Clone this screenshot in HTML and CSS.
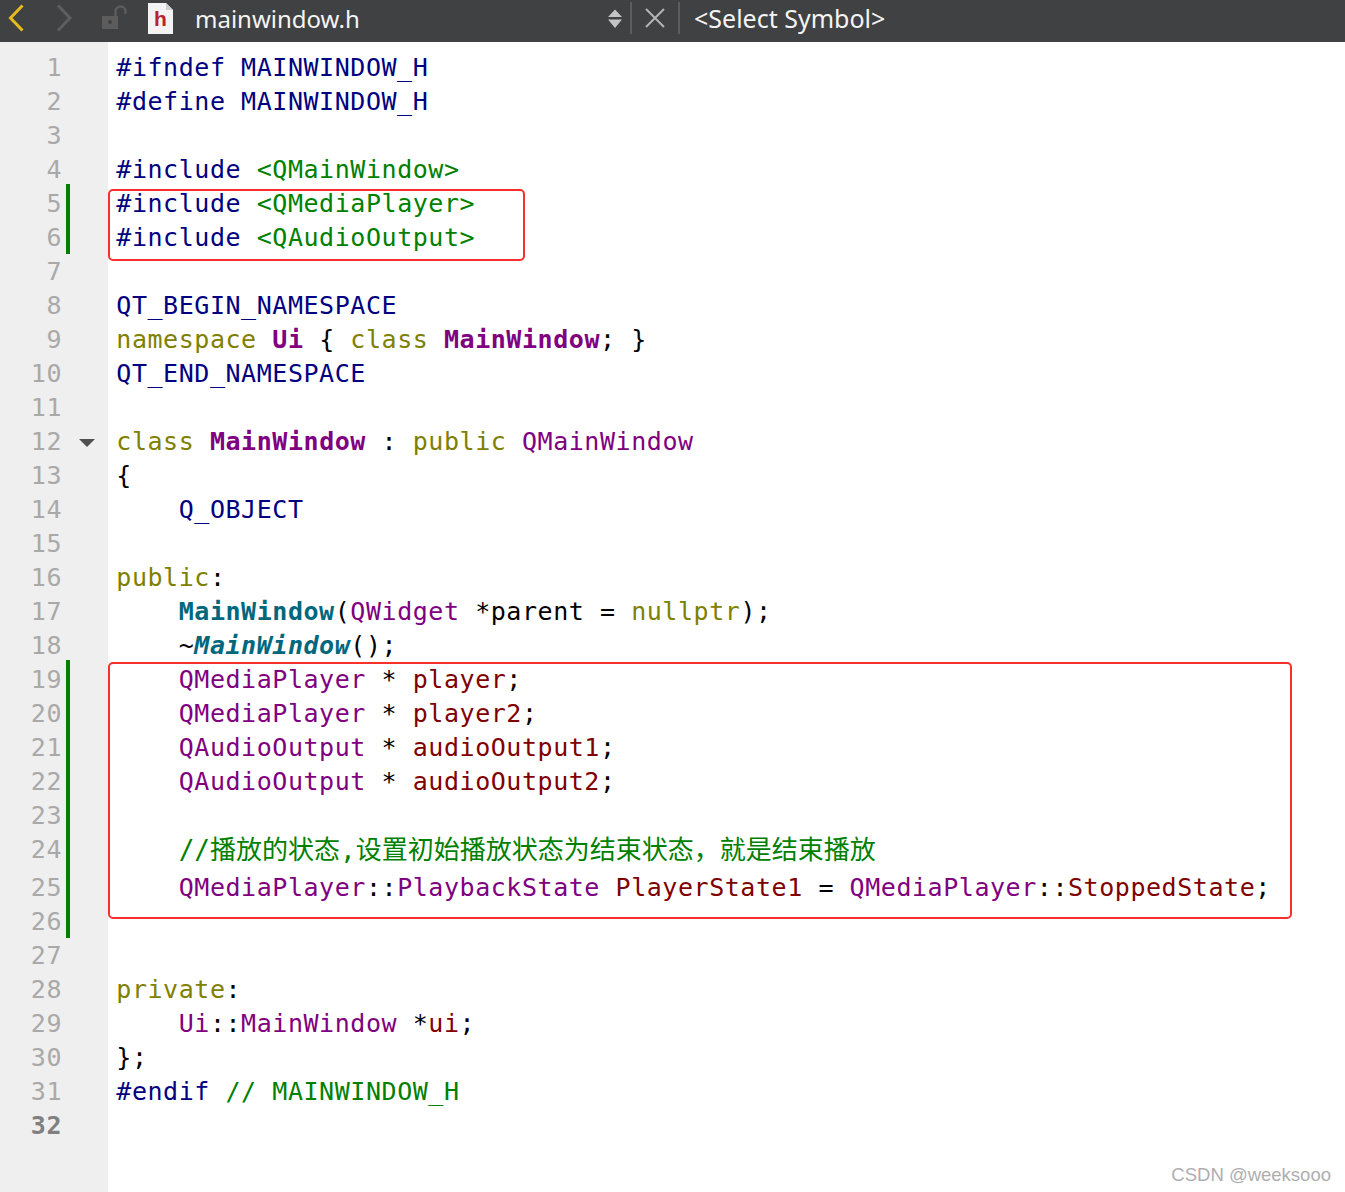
FILE: index.html
```html
<!DOCTYPE html>
<html lang="en">
<head>
<meta charset="utf-8">
<title>mainwindow.h</title>
<link rel="stylesheet" href="styles.css">
</head>
<body>
<header class="toolbar">
  <svg class="ic ic-back" width="18" height="28" viewBox="0 0 18 28"><path d="M14.5 1.5 L2.5 14 L14.5 26.5" fill="none" stroke="#e8bb1c" stroke-width="3"/></svg>
  <svg class="ic ic-fwd" width="18" height="28" viewBox="0 0 18 28"><path d="M2 1.5 L14 14 L2 26.5" fill="none" stroke="#5e5e5e" stroke-width="3"/></svg>
  <svg class="ic ic-lock" width="26" height="26" viewBox="0 0 26 26"><rect x="1" y="11" width="16" height="13" fill="#5c5c5c"/><circle cx="9" cy="17" r="2" fill="#404142"/><path d="M14.5 11 V6 a5 4.5 0 0 1 10 0 V9" fill="none" stroke="#5c5c5c" stroke-width="2.4"/></svg>
  <svg class="ic ic-file" width="26" height="32" viewBox="0 0 26 32"><path d="M0 1 H18 L25 8 V32 H0 Z" fill="#f3f3f3"/><path d="M18 1 V8 H25 Z" fill="#cfcfcf"/><text x="6" y="24" class="file-h">h</text></svg>
  <span class="filename">mainwindow.h</span>
  <svg class="ic ic-updown" width="16" height="24" viewBox="0 0 16 24"><path d="M8 3.5 L15 11 H1 Z M8 22 L15 13.5 H1 Z" fill="#c4c4c4"/></svg>
  <span class="sep"></span>
  <svg class="ic ic-close" width="22" height="22" viewBox="0 0 22 22"><path d="M2 2 L20 20 M20 2 L2 20" fill="none" stroke="#b4b4b4" stroke-width="2"/></svg>
  <span class="sep sep-2"></span>
  <span class="symbol">&lt;Select Symbol&gt;</span>
</header>

<main class="editor">
  <div class="gutter-top"></div>
  <div class="row"><span class="ln">1</span><code class="code"><i class="blue">#ifndef MAINWINDOW_H</i></code></div>
  <div class="row"><span class="ln">2</span><code class="code"><i class="blue">#define MAINWINDOW_H</i></code></div>
  <div class="row"><span class="ln">3</span><code class="code"></code></div>
  <div class="row"><span class="ln">4</span><code class="code"><i class="blue">#include</i> <i class="green">&lt;QMainWindow&gt;</i></code></div>
  <div class="row mark mark-start"><span class="ln">5</span><code class="code"><i class="blue">#include</i> <i class="green">&lt;QMediaPlayer&gt;</i></code></div>
  <div class="row mark"><span class="ln">6</span><code class="code"><i class="blue">#include</i> <i class="green">&lt;QAudioOutput&gt;</i></code></div>
  <div class="row"><span class="ln">7</span><code class="code"></code></div>
  <div class="row"><span class="ln">8</span><code class="code"><i class="blue">QT_BEGIN_NAMESPACE</i></code></div>
  <div class="row"><span class="ln">9</span><code class="code"><i class="olive">namespace</i> <b class="purple">Ui</b> { <i class="olive">class</i> <b class="purple">MainWindow</b>; }</code></div>
  <div class="row"><span class="ln">10</span><code class="code"><i class="blue">QT_END_NAMESPACE</i></code></div>
  <div class="row"><span class="ln">11</span><code class="code"></code></div>
  <div class="row fold"><span class="ln">12</span><code class="code"><i class="olive">class</i> <b class="purple">MainWindow</b> : <i class="olive">public</i> <i class="purple">QMainWindow</i></code></div>
  <div class="row"><span class="ln">13</span><code class="code">{</code></div>
  <div class="row"><span class="ln">14</span><code class="code">    <i class="blue">Q_OBJECT</i></code></div>
  <div class="row"><span class="ln">15</span><code class="code"></code></div>
  <div class="row"><span class="ln">16</span><code class="code"><i class="olive">public</i>:</code></div>
  <div class="row"><span class="ln">17</span><code class="code">    <b class="teal">MainWindow</b>(<i class="purple">QWidget</i> *<i class="ink">parent</i> = <i class="olive">nullptr</i>);</code></div>
  <div class="row"><span class="ln">18</span><code class="code">    ~<b class="teal slant">MainWindow</b>();</code></div>
  <div class="row mark mark-start"><span class="ln">19</span><code class="code">    <i class="purple">QMediaPlayer</i> * <i class="maroon">player</i>;</code></div>
  <div class="row mark"><span class="ln">20</span><code class="code">    <i class="purple">QMediaPlayer</i> * <i class="maroon">player2</i>;</code></div>
  <div class="row mark"><span class="ln">21</span><code class="code">    <i class="purple">QAudioOutput</i> * <i class="maroon">audioOutput1</i>;</code></div>
  <div class="row mark"><span class="ln">22</span><code class="code">    <i class="purple">QAudioOutput</i> * <i class="maroon">audioOutput2</i>;</code></div>
  <div class="row mark"><span class="ln">23</span><code class="code"></code></div>
  <div class="row mark row-cjk"><span class="ln">24</span><code class="code">    <i class="green cjk">//播放的状态,设置初始播放状态为结束状态，就是结束播放</i></code></div>
  <div class="row mark"><span class="ln">25</span><code class="code">    <i class="purple">QMediaPlayer</i>::<i class="purple">PlaybackState</i> <i class="maroon">PlayerState1</i> = <i class="purple">QMediaPlayer</i>::<i class="maroon">StoppedState</i>;</code></div>
  <div class="row mark"><span class="ln">26</span><code class="code"></code></div>
  <div class="row"><span class="ln">27</span><code class="code"></code></div>
  <div class="row"><span class="ln">28</span><code class="code"><i class="olive">private</i>:</code></div>
  <div class="row"><span class="ln">29</span><code class="code">    <i class="purple">Ui</i>::<i class="purple">MainWindow</i> *<i class="maroon">ui</i>;</code></div>
  <div class="row"><span class="ln">30</span><code class="code">};</code></div>
  <div class="row"><span class="ln">31</span><code class="code"><i class="blue">#endif</i> <i class="green">// MAINWINDOW_H</i></code></div>
  <div class="row"><span class="ln ln-current">32</span><code class="code"></code></div>
  <div class="gutter-fill"></div>
  <div class="callout callout-a"></div>
  <div class="callout callout-b"></div>
</main>
<div class="watermark">CSDN @weeksooo</div>
</body>
</html>
```
FILE: styles.css
```css
* { box-sizing: border-box; }
html, body { margin: 0; height: 1192px; overflow: hidden; background: #fff; }
body { display: flex; flex-direction: column; position: relative; }

.toolbar {
  height: 42px; flex: none; background: #404142; padding-bottom: 6px;
  display: flex; align-items: center; position: relative;
  font-family: "Noto Sans", "Open Sans", sans-serif; color: #f4f4f4; font-size: 25px;
}
.ic { flex: none; display: block; }
.ic-back { margin-left: 8px; }
.ic-fwd { margin-left: 30px; }
.ic-lock { margin-left: 27px; }
.ic-file { margin-left: 21px; }
.file-h { font: bold 21px "Liberation Sans", sans-serif; fill: #b8232c; }
.filename { margin-left: 21px; width: 412px; font-size: 24px; }
.sep { width: 2px; height: 32px; background: #5c5c5c; margin-left: 7px; flex: none; }
.ic-close { margin-left: 12px; }
.sep-2 { margin-left: 12px; }
.symbol { margin-left: 14px; }

.editor { flex: 1; position: relative; display: flex; flex-direction: column; }
.gutter-top { height: 8px; width: 108px; flex: none; background: #efefef; }
.row { display: flex; height: 34px; flex: none; position: relative; }
.row-cjk { height: 38px; }
.ln {
  width: 108px; flex: none; background: #efefef; color: #a9a9a9;
  padding: 1px 46px 0 0; text-align: right;
  font: 25px/34px "DejaVu Sans Mono", monospace; letter-spacing: 0.55px;
}
.ln-current { font-weight: bold; color: #808080; }
.gutter-fill { flex: 1; width: 108px; background: #efefef; }
.code {
  flex: 1; padding: 1px 0 0 8.3px; white-space: pre; color: #000;
  font: 25px/34px "DejaVu Sans Mono", monospace; letter-spacing: 0.55px;
}
.code i { font-style: normal; }
.blue { color: #000080; }
.green { color: #008000; }
.olive { color: #808000; }
.purple { color: #800080; }
.teal { color: #00677c; }
.maroon { color: #800000; }
.ink { color: #000; }
.code .slant { font-style: italic; }
.code .cjk { font-family: "DejaVu Sans Mono", "Noto Sans CJK SC", monospace; font-size: 26px; letter-spacing: 0; }

.mark::after {
  content: ""; position: absolute; left: 66px; top: 0; bottom: 0; width: 4px; background: #008000;
}
.mark-start::after { top: -2px; }

.fold::after {
  content: ""; position: absolute; left: 79px; top: 15px;
  border-style: solid; border-width: 8px 8px 0; border-color: #505050 transparent transparent;
}

.callout { position: absolute; border: 2px solid #f7302b; border-radius: 5px; left: 108px; }
.callout-a { top: 147px; width: 417px; height: 72px; }
.callout-b { top: 620px; width: 1184px; height: 257px; }

.watermark {
  position: absolute; right: 14px; bottom: 6px;
  font: 18.5px "Liberation Sans", sans-serif; color: #aeaeae;
}
```
